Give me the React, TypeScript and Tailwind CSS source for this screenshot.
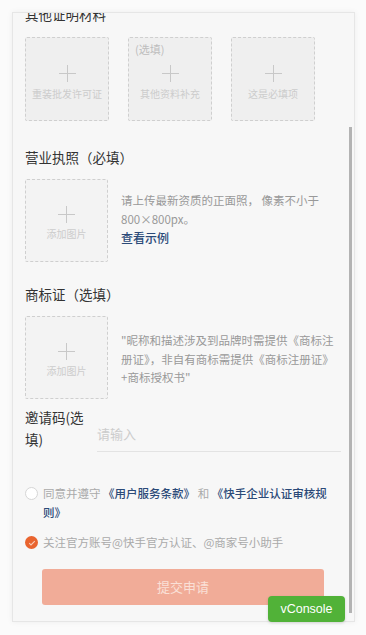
const font = { fontFamily: '"Noto Sans CJK SC", "Noto Sans", sans-serif' };

const PlusIcon = () => (
  <svg width="17" height="17" viewBox="0 0 17 17" className="block">
    <path d="M8.5 0v17M0 8.5h17" stroke="#c8c8c8" strokeWidth="1" />
  </svg>
);

const UploadBox = ({ label, tag }: { label: string; tag?: string }) => (
  <div className="relative w-[84px] h-[84px] shrink-0 border border-dashed border-[#cfcfcf] rounded-[2px] bg-[#efefef] flex flex-col items-center pt-[27px]">
    {tag && (
      <span className="absolute left-[6px] top-[4px] text-[11px] leading-[14px] text-[#bdbdbd]">{tag}</span>
    )}
    <PlusIcon />
    <span className="mt-[5px] text-[10px] leading-[14px] text-[#cccccc] whitespace-nowrap">{label}</span>
  </div>
);

const ImageSlot = () => (
  <div className="w-[83px] h-[83px] shrink-0 border border-dashed border-[#cfcfcf] rounded-[2px] bg-[#f3f3f3] flex flex-col items-center pt-[26px]">
    <PlusIcon />
    <span className="mt-[4px] text-[10px] leading-[14px] text-[#cccccc]">添加图片</span>
  </div>
);

const App = () => {
  return (
    <div className="w-[366px] h-[635px] bg-[#fbfbfb] pt-[12px] pl-[12px] relative overflow-hidden" style={font}>
      <div className="relative w-[343px] h-[610px] bg-[#f7f7f7] border border-[#e6e6e6] shadow-[0_0_6px_rgba(0,0,0,0.06)] overflow-hidden">
        <div className="-mt-[9px] pl-[12px] pr-[12px]">
          <h3 className="text-[13.5px] leading-[20px] text-[#333]">其他证明材料</h3>
          <div className="mt-[13px] flex gap-[19px]">
            <UploadBox label="重装批发许可证" />
            <UploadBox label="其他资料补充" tag="(选填)" />
            <UploadBox label="这是必填项" />
          </div>

          <h3 className="mt-[26px] text-[13.5px] leading-[20px] text-[#333]">营业执照（必填）</h3>
          <div className="mt-[12px] flex">
            <ImageSlot />
            <div className="ml-[13px] pt-[12px] text-[11.5px] leading-[19px] text-[#999] whitespace-nowrap">
              <p>请上传最新资质的正面照， 像素不小于</p>
              <p>800×800px。</p>
              <p className="text-[12px] leading-[18px] font-medium text-[#2b4a78]">查看示例</p>
            </div>
          </div>

          <h3 className="mt-[22px] text-[13.5px] leading-[20px] text-[#333]">商标证（选填）</h3>
          <div className="mt-[12px] flex">
            <ImageSlot />
            <div className="ml-[13px] pt-[15px] text-[11.5px] leading-[18.5px] text-[#999] whitespace-nowrap">
              <p>"昵称和描述涉及到品牌时需提供《商标注</p>
              <p>册证》，非自有商标需提供《商标注册证》</p>
              <p>+商标授权书"</p>
            </div>
          </div>

          <div className="mt-[7px] flex">
            <div className="w-[60px] shrink-0 text-[13.5px] leading-[22px] text-[#333] whitespace-nowrap">
              邀请码(选
              <br />
              填)
            </div>
            <div className="ml-[12px] flex-1 mr-[1px] pt-[14px] border-b border-[#e3e3e3] h-[46px]">
              <span className="text-[13px] leading-[20px] text-[#cccccc]">请输入</span>
            </div>
          </div>

          <div className="mt-[32px] flex items-start">
            <span className="mt-[3px] w-[13px] h-[13px] shrink-0 rounded-full border border-[#d6d6d6] bg-white" />
            <p className="ml-[5px] text-[11.5px] leading-[19px] text-[#aaa] whitespace-nowrap">
              同意并遵守 <span className="font-medium text-[#2b4a78]">《用户服务条款》</span> 和{' '}
              <span className="font-medium text-[#2b4a78]">《快手企业认证审核规</span>
              <br />
              <span className="font-medium text-[#2b4a78]">则》</span>
            </p>
          </div>

          <div className="mt-[11px] flex items-center">
            <span className="w-[13px] h-[13px] shrink-0 rounded-full bg-[#e9642f] flex items-center justify-center">
              <svg width="8" height="8" viewBox="0 0 8 8">
                <path d="M1.2 4.2l1.8 1.7L6.8 2.2" stroke="#f9cdb8" strokeWidth="1.1" fill="none" />
              </svg>
            </span>
            <p className="ml-[5px] text-[11.5px] leading-[19px] text-[#aaa] whitespace-nowrap">关注官方账号@快手官方认证、@商家号小助手</p>
          </div>

          <div className="mt-[17px] ml-[17px] w-[282px] h-[36px] rounded-[3px] bg-[#f1ac98] flex items-center justify-center">
            <span className="text-[13px] text-[#fae0d7]">提交申请</span>
          </div>
        </div>

        <div className="absolute right-[2px] top-[114px] w-[3px] h-[486px] bg-[#b3b3b3]" />
      </div>

      <div className="absolute left-[268px] top-[596px] w-[77px] h-[26px] rounded-[4px] bg-[#51b238] shadow-[0_1px_3px_rgba(0,0,0,0.15)] flex items-center justify-center">
        <span className="text-[12.5px] text-white" style={{ fontFamily: '"Liberation Sans", Arial, sans-serif' }}>vConsole</span>
      </div>
    </div>
  );
};

export default App;
